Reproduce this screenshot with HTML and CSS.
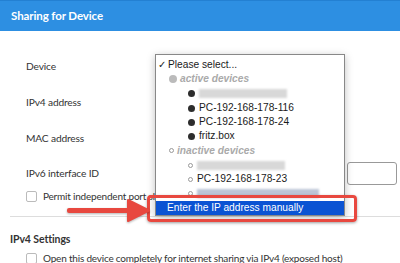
FILE: index.html
```html
<!DOCTYPE html>
<html lang="en">
  <head>
    <meta charset="UTF-8">
    <meta name="viewport" content="width=device-width, initial-scale=1.0">
    <title>Sharing for Device</title>
    <link rel="stylesheet" href="styles.css">
  </head>
  <body>
    <div class="page">
      <div class="titlebar">Sharing for Device</div>

      <div class="form">
        <div class="row"><span class="label">Device</span></div>
        <div class="row"><span class="label">IPv4 address</span></div>
        <div class="row"><span class="label">MAC address</span></div>
        <div class="row row-v6">
          <span class="label">IPv6 interface ID</span>
          <input class="field" type="text">
        </div>
        <div class="check"><span class="box"></span>Permit independent port sharing for this device</div>
      </div>

      <div class="divider"></div>
      <div class="section">IPv4 Settings</div>
      <div class="check check-last"><span class="box"></span>Open this device completely for internet sharing via IPv4 (exposed host)</div>

      <!-- open select list -->
      <ul class="menu">
        <li class="item sel"><span class="tick">✓</span>Please select...</li>
        <li class="item group"><span class="dot grey"></span>active devices</li>
        <li class="item opt"><span class="dot"></span><span class="blur"></span></li>
        <li class="item opt"><span class="dot"></span>PC-192-168-178-116</li>
        <li class="item opt"><span class="dot"></span>PC-192-168-178-24</li>
        <li class="item opt"><span class="dot"></span>fritz.box</li>
        <li class="item group off"><span class="ring"></span>inactive devices</li>
        <li class="item opt off"><span class="ring"></span><span class="blur"></span></li>
        <li class="item opt off"><span class="ring"></span>PC-192-168-178-23</li>
        <li class="item opt off"><span class="ring"></span><span class="blur wide"></span></li>
        <li class="item manual">Enter the IP address manually</li>
      </ul>

      <!-- annotation -->
      <div class="callout"></div>
      <svg class="arrow" width="86" height="26" viewBox="0 0 86 26">
        <rect x="1" y="10" width="65" height="5" rx="2" fill="#e8483f"/>
        <polygon points="62,2 83,12.5 62,23" fill="#e8483f" stroke="#e8483f" stroke-width="2" stroke-linejoin="round"/>
      </svg>
    </div>
  </body>
</html>
```

FILE: styles.css
```css
body {
  margin: 0;
  font-family: Lato, "Open Sans", sans-serif;
  color: #333;
  background: #fff;
}
.page {
  position: relative;
  width: 400px;
  height: 263px;
  overflow: hidden;
}
.titlebar {
  height: 30px;
  border-top: 1px solid #2380d2;
  background-color: #2d8fe2;
  color: #fff;
  font-size: 11.5px;
  font-weight: bold;
  letter-spacing: -0.1px;
  line-height: 30px;
  padding-left: 11px;
}
.form {
  padding: 17px 3px 0 26px;
}
.row {
  height: 36px;
  display: flex;
  align-items: center;
  font-size: 10.2px;
  letter-spacing: -0.15px;
}
.row-v6 {
  height: 34px;
}
.field {
  margin-left: auto;
  width: 50px;
  height: 23px;
  box-sizing: border-box;
  border: 1px solid #999;
  border-radius: 3px;
  padding: 0;
}
.check {
  height: 12px;
  display: flex;
  align-items: center;
  font-size: 10px;
  letter-spacing: -0.2px;
  white-space: nowrap;
}
.box {
  width: 11px;
  height: 11px;
  box-sizing: border-box;
  border: 1px solid #bbb;
  border-radius: 2px;
  margin-right: 6px;
  flex: none;
}
.divider {
  margin: 14px 0 0 10px;
  border-top: 1px solid #ddd;
}
.section {
  margin: 14px 0 0 10px;
  font-size: 10.5px;
  font-weight: bold;
  letter-spacing: -0.1px;
  line-height: 16px;
}
.check-last {
  margin: 5px 0 0 26px;
}

/* select list */
.menu {
  position: absolute;
  left: 155px;
  top: 54px;
  width: 190px;
  height: 162px;
  box-sizing: border-box;
  margin: 0;
  padding: 3px 0 0;
  list-style: none;
  background: #fff;
  border: 1px solid #888;
  box-shadow: 0 2px 8px rgba(0, 0, 0, 0.25);
  font-family: "Liberation Sans", Arial, sans-serif;
  font-size: 10.2px;
  color: #1a1a1a;
}
.item {
  position: relative;
  height: 14.3px;
  line-height: 14.3px;
  display: flex;
  align-items: center;
  white-space: nowrap;
}
.sel {
  padding-left: 12px;
}
.tick {
  position: absolute;
  left: 2px;
  font-family: "DejaVu Sans", sans-serif;
  font-size: 10px;
  font-weight: bold;
}
.group {
  padding-left: 13px;
  color: #aaa;
  font-weight: bold;
  font-style: italic;
}
.opt {
  padding-left: 32px;
}
.dot {
  width: 7px;
  height: 7px;
  border-radius: 50%;
  background: #2d2d2d;
  margin-right: 4px;
}
.dot.grey {
  width: 8px;
  height: 8px;
  background: #bbb;
  margin-right: 3px;
}
.ring {
  width: 5px;
  height: 5px;
  box-sizing: border-box;
  border: 1px solid #999;
  border-radius: 50%;
  margin-right: 4px;
}
.group.off .ring {
  margin-right: 3px;
}
.blur {
  width: 88px;
  height: 9px;
  background: #d8d8d8;
  filter: blur(1.2px);
}
.blur.wide {
  width: 122px;
  background: #bcc5d6;
}
.manual {
  height: 14.3px;
  padding-left: 11px;
  background: #0b53d3;
  color: #fff;
}

/* annotation */
.callout {
  position: absolute;
  left: 147px;
  top: 195px;
  width: 210px;
  height: 27px;
  box-sizing: border-box;
  border: 3px solid #e8483f;
  border-radius: 4px;
  box-shadow: 0 1px 3px rgba(0, 0, 0, 0.35);
}
.arrow {
  position: absolute;
  left: 66px;
  top: 198px;
  filter: drop-shadow(0 1px 1px rgba(0, 0, 0, 0.3));
}
```
